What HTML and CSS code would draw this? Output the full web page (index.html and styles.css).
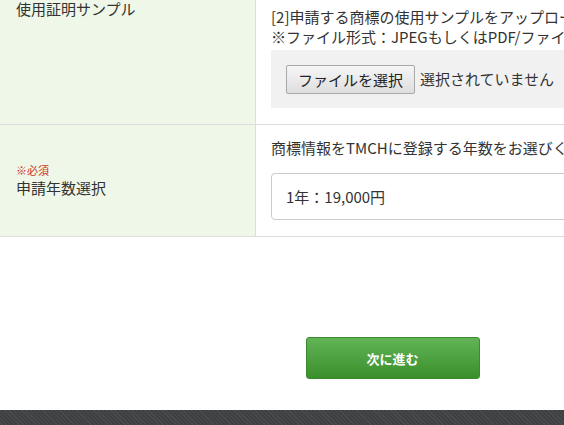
FILE: index.html
```html
<!DOCTYPE html>
<html lang="ja">
<head>
    <meta charset="UTF-8">
    <meta name="viewport" content="width=device-width, initial-scale=1.0">
    <title>TMCH申請</title>
    <link rel="stylesheet" href="styles.css">
</head>
<body>
    <div class="page">
        <table class="form-table">
            <tr>
                <th>使用証明サンプル</th>
                <td>
                    <p>[1]申請する商標の登録証をアップロードしてください。</p>
                    <div class="file-box">
                        <button type="button" class="file-btn">ファイルを選択</button>
                        <span class="file-name">選択されていません</span>
                    </div>
                    <p class="gap">[2]申請する商標の使用サンプルをアップロードしてください。</p>
                    <p>※ファイル形式：JPEGもしくはPDF/ファイルサイズ：5MB以内</p>
                    <div class="file-box">
                        <button type="button" class="file-btn">ファイルを選択</button>
                        <span class="file-name">選択されていません</span>
                    </div>
                </td>
            </tr>
            <tr>
                <th>
                    <span class="required">※必須</span>
                    申請年数選択
                </th>
                <td>
                    <p>商標情報をTMCHに登録する年数をお選びください。</p>
                    <select class="year-select">
                        <option>1年：19,000円</option>
                        <option>3年：51,000円</option>
                        <option>5年：80,000円</option>
                    </select>
                </td>
            </tr>
        </table>

        <div class="actions">
            <button type="button" class="next-btn">次に進む</button>
        </div>
    </div>
    <footer class="footer"></footer>
</body>
</html>
```

FILE: styles.css
```css
/* General Styles */
body {
    font-family: "Noto Sans CJK JP", "Noto Sans", sans-serif;
    font-size: 15px;
    line-height: 20px;
    margin: 0;
    padding: 0;
    color: #333;
    background-color: #fff;
    overflow: hidden;
}
.page {
    width: 785px;
    margin-top: -106px;
}
p {
    margin: 0;
}

/* Form table */
.form-table {
    width: 100%;
    border-collapse: collapse;
}
.form-table tr {
    border-bottom: 1px solid #ddd;
}
.form-table th {
    width: 223px;
    padding: 0 16px;
    text-align: left;
    font-weight: normal;
    vertical-align: middle;
    background-color: #eff7e8;
    border-right: 1px solid #ddd;
}
.form-table td {
    padding: 13px 15px 16px 15px;
    vertical-align: top;
}
.required {
    display: block;
    color: #d0312d;
    font-size: 11px;
    line-height: 14px;
    margin-bottom: 1px;
}
.gap {
    margin-top: 19px;
}

/* File upload */
.file-box {
    display: flex;
    align-items: center;
    height: 58px;
    margin-top: 3px;
    padding: 0 15px;
    background-color: #f1f1f1;
}
.file-btn {
    height: 29px;
    padding: 0 11px;
    font-family: inherit;
    font-size: 15px;
    color: #222;
    border: 1px solid #a9a9a9;
    border-radius: 2px;
    background: linear-gradient(#f6f6f6, #dedede);
}
.file-name {
    margin-left: 5px;
}

/* Select */
.year-select {
    display: block;
    width: 100%;
    height: 47px;
    margin-top: 15px;
    padding: 0 14px;
    font-family: inherit;
    font-size: 15px;
    color: #333;
    background-color: #fff;
    border: 1px solid #ccc;
    border-radius: 4px;
    appearance: none;
}

/* Next button */
.actions {
    display: flex;
    justify-content: center;
    padding: 100px 0 31px;
}
.next-btn {
    width: 174px;
    height: 42px;
    font-family: inherit;
    font-size: 13px;
    font-weight: bold;
    color: #fff;
    border: 1px solid #3a8b2e;
    border-radius: 3px;
    background: linear-gradient(#62b457, #3a8f2b);
    cursor: pointer;
}

.footer {
    height: 60px;
    background-color: #3f4042;
    background-image: repeating-linear-gradient(45deg, #4a4b4d 0, #4a4b4d 1px, transparent 1px, transparent 3px);
}
```
